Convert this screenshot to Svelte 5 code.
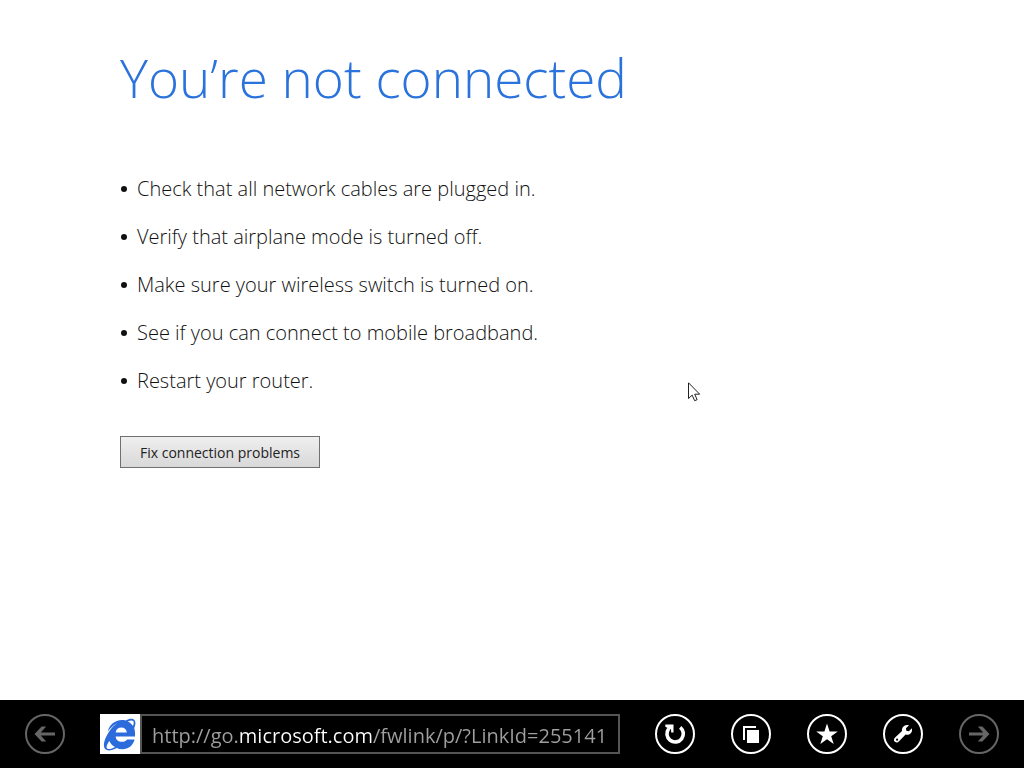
<script>
  const tips = [
    'Check that all network cables are plugged in.',
    'Verify that airplane mode is turned off.',
    'Make sure your wireless switch is turned on.',
    'See if you can connect to mobile broadband.',
    'Restart your router.'
  ];
  let url = $state('http://go.microsoft.com/fwlink/p/?LinkId=255141');
</script>

<div class="screen">
  <main>
    <h1>You’re not connected</h1>
    <ul>
      {#each tips as tip}
        <li>{tip}</li>
      {/each}
    </ul>
    <button class="fix" type="button">Fix connection problems</button>
  </main>

  <nav class="bar" aria-label="Browser">
    <button class="round dim" type="button" aria-label="Back">
      <svg viewBox="0 0 40 40"><path d="M30 18.400v3.200H15.800l5.400 5.800h-4.600L9.500 20l7.100-7.400h4.600l-5.400 5.800z" /></svg>
    </button>

    <div class="address">
      <svg class="logo" viewBox="0 0 40 40" aria-hidden="true">
        <rect width="40" height="40" fill="#fff" />
        <path fill="#2b6bdc" fill-rule="evenodd" d="M35 22.500H15.700c.2 3.400 2.800 5.300 6.100 5.300 2.400 0 4.300-.8 5.300-2.300h7.500C33 31.500 28.300 35.300 22.300 35.300c-2 0-3.900-.4-5.500-1.200C11.500 37 7.200 37.200 5.200 35.100 2.500 32.300 4.200 25 8.800 18 11 14.500 14 11.400 17.200 9c-3.600 2-6.900 5-9.400 8.500C9 10.800 15 6 22 5.900c1.200 0 2.500.1 3.600.5 4-2 7.300-2.200 8.800-.4 1.600 1.800 1.300 5-.2 8.300C35.200 17 35.200 19.500 35 22.500zM15.700 18.400h11.100c-.3-3.300-2.600-5-5.500-5s-5.300 1.800-5.600 5zM33 12c.9-2.200 1-4 .1-4.900-.9-1-2.900-.8-5.400.3C30 8.400 31.800 10 33 12zM9.300 27C7 30.600 5.900 33.200 7.200 34.500c1.300 1.200 4.400.6 8-1.400-2.700-1.400-4.800-3.500-5.900-6.100z" />
      </svg>
      <input type="text" aria-label="Address" spellcheck="false" bind:value={url} />
    </div>

    <div class="tools">
      <button class="round" type="button" aria-label="Refresh">
        <svg viewBox="0 0 40 40">
          <path d="M25.200 13.300A8.200 8.200 0 1 1 13.600 14.800" class="stroke" />
          <path d="M10.300 10.500h8.200v7.900h-2.300l-.2-3.500-1.500 1.200-2.300-2.300-1.900-1z" />
        </svg>
      </button>
      <button class="round" type="button" aria-label="Tabs">
        <svg viewBox="0 0 40 40"><path d="M12 12h13v2H14v12h-2zM16 16h12v13H16z" /></svg>
      </button>
      <button class="round" type="button" aria-label="Favorites">
        <svg viewBox="0 0 40 40"><path d="M20 9.500l2.600 7.900h8.200l-6.600 4.800 2.500 7.900-6.700-4.900-6.700 4.900 2.500-7.900-6.600-4.800h8.200z" /></svg>
      </button>
      <button class="round" type="button" aria-label="Page tools">
        <svg viewBox="0 0 40 40"><path fill-rule="evenodd" d="M26 11.300l-3 3 .3 2.500 2.600.4 2.900-3c.8 2.600-.2 5-2.300 6-1.300.7-2.500.6-3.900.3l-6.500 6.700c-1.400 1.500-3.600 1.500-4.500.4-1-1.200-.8-3 .5-4.200l6.900-6.300c-.6-3.500 2.500-7.200 7-5.800zM14.100 24.600a1.100 1.100 0 1 0 0 2.200 1.100 1.100 0 0 0 0-2.200z" /></svg>
      </button>
      <button class="round dim" type="button" aria-label="Forward">
        <svg viewBox="0 0 40 40"><path d="M10 18.400v3.200h14.200l-5.400 5.800h4.600l7.100-7.400-7.100-7.400h-4.600l5.400 5.800z" /></svg>
      </button>
    </div>
  </nav>

  <svg class="pointer" viewBox="0 0 13 20" aria-hidden="true">
    <path d="M.5.800v15.700l3.700-3.400 2.400 5.600 2.500-1-2.400-5.500h5z" />
  </svg>
</div>

<style>
  :global(body) {
    margin: 0;
    background: #fff;
  }
  .screen {
    position: relative;
    display: flex;
    flex-direction: column;
    min-height: 100vh;
    font-family: 'Open Sans', 'Noto Sans', sans-serif;
    color: #111;
  }
  main {
    flex: 1;
    padding: 40px 120px;
  }
  h1 {
    margin: 0;
    font-size: 53px;
    line-height: 76px;
    font-weight: 300;
    color: #2a72dc;
  }
  ul {
    display: flex;
    flex-direction: column;
    gap: 20px;
    margin: 59px 0 0;
    padding: 0;
    list-style: none;
    font-size: 20px;
    line-height: 28px;
    font-weight: 300;
  }
  li {
    display: flex;
    align-items: center;
    gap: 10px;
  }
  li::before {
    content: '';
    width: 6px;
    height: 6px;
    margin-left: 1px;
    border-radius: 50%;
    background: #111;
  }
  .fix {
    min-width: 200px;
    height: 32px;
    margin-top: 41px;
    padding: 0 16px;
    border: 1px solid #707070;
    background: linear-gradient(#efefef, #d8d8d8);
    font-family: 'Open Sans', sans-serif;
    font-size: 14px;
    color: #222;
  }
  .bar {
    display: flex;
    align-items: center;
    gap: 35px;
    height: 68px;
    padding: 0 25px;
    background: #000;
  }
  .address {
    display: flex;
    flex: 1;
    min-width: 0;
    height: 40px;
  }
  .logo {
    flex: none;
    width: 40px;
    height: 40px;
  }
  input {
    flex: 1;
    min-width: 0;
    box-sizing: border-box;
    padding: 2px 10px 0;
    border: 2px solid #555;
    border-radius: 0;
    outline: 0;
    /* The host's domain is lit, the rest of the address is grey. */
    background: linear-gradient(90deg, #a0a0a0 97px, #fff 97px, #fff 230px, #a0a0a0 230px);
    background-clip: text;
    font-family: 'Open Sans', sans-serif;
    font-size: 20px;
    color: transparent;
    caret-color: #fff;
  }
  .tools {
    display: flex;
    gap: 36px;
  }
  .round {
    flex: none;
    box-sizing: border-box;
    width: 40px;
    height: 40px;
    padding: 0;
    border: 2px solid currentColor;
    border-radius: 50%;
    background: none;
    color: #fff;
  }
  .round svg {
    display: block;
    width: 40px;
    height: 40px;
    margin: -2px;
    fill: currentColor;
  }
  .round .stroke {
    fill: none;
    stroke: currentColor;
    stroke-width: 3.600;
  }
  .dim {
    color: #666;
  }
  .pointer {
    position: absolute;
    left: 688px;
    top: 382px;
    width: 13px;
    height: 20px;
    fill: #fff;
    stroke: #222;
  }
</style>
